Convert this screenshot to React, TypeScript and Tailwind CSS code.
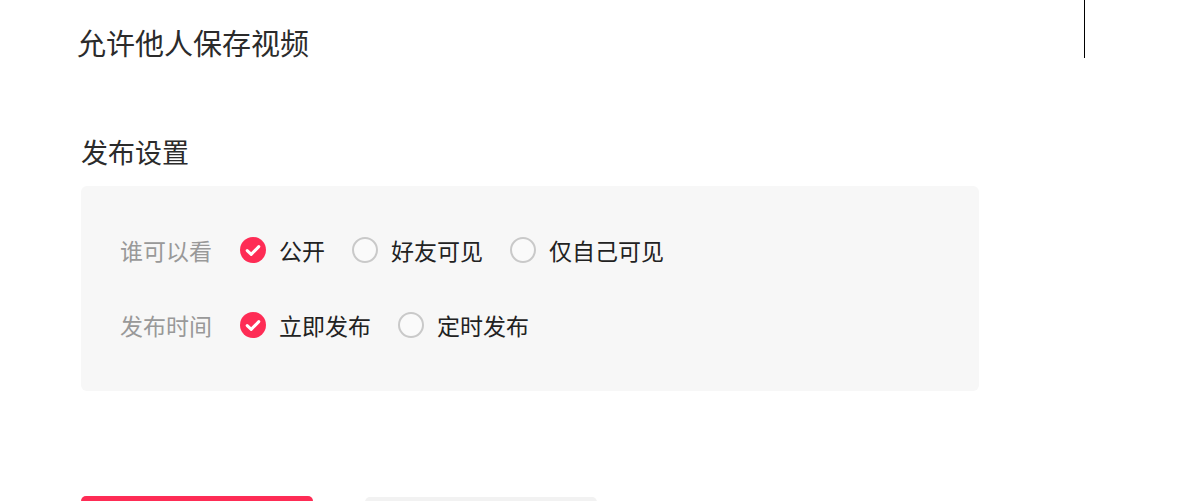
import React from 'react';

const font = { fontFamily: '"Microsoft YaHei", "Noto Sans CJK SC", "Noto Sans", sans-serif' };

type Option = { label: string; checked?: boolean };

function Radio({ checked }: { checked?: boolean }) {
  if (checked) {
    return (
      <svg width="26" height="26" viewBox="0 0 26 26" className="shrink-0">
        <circle cx="13" cy="13" r="13" fill="#fe2c55" />
        <path d="M7.2 13.6 L11.2 17.4 L18.8 9.6" fill="none" stroke="#fff" strokeWidth="3" strokeLinecap="round" strokeLinejoin="round" />
      </svg>
    );
  }
  return <span className="block w-[26px] h-[26px] shrink-0 rounded-full border-2 border-[#c9c9c9] bg-white/40" />;
}

function Row({ label, options }: { label: string; options: Option[] }) {
  return (
    <div className="flex items-center h-[40px]">
      <span className="w-[92px] mr-[28px] text-[23px] text-[#999] leading-none whitespace-nowrap">{label}</span>
      <div className="flex items-center gap-[27px]">
        {options.map((o) => (
          <label key={o.label} className="flex items-center gap-[13px] cursor-pointer">
            <Radio checked={o.checked} />
            <span className="text-[23px] text-[#222] leading-none whitespace-nowrap">{o.label}</span>
          </label>
        ))}
      </div>
    </div>
  );
}

export default function App() {
  return (
    <div className="relative w-[1193px] h-[501px] overflow-hidden bg-white" style={font}>
      {/* divider at the top right */}
      <div className="absolute left-[1084px] top-0 w-px h-[58px] bg-black" />

      <div className="pl-[77px] pt-[22px]">
        <h2 className="text-[29px] leading-[40px] text-[#2b2b2b] font-normal">允许他人保存视频</h2>
      </div>

      <div className="pl-[81px]">
        <h3 className="mt-[72px] text-[27px] leading-[36px] text-[#2b2b2b] font-normal">发布设置</h3>

        <div className="mt-[16px] w-[898px] h-[205px] rounded-md bg-[#f7f7f7] pl-[39px] pt-[44px] flex flex-col gap-[35px]">
          <Row label="谁可以看" options={[{ label: '公开', checked: true }, { label: '好友可见' }, { label: '仅自己可见' }]} />
          <Row label="发布时间" options={[{ label: '立即发布', checked: true }, { label: '定时发布' }]} />
        </div>

        <div className="mt-[105px] flex gap-[52px]">
          <button className="w-[232px] h-[44px] rounded-[5px] bg-[#fe2c55] text-white text-[20px]">发布</button>
          <button className="w-[232px] h-[44px] mt-px rounded-[5px] bg-[#f2f2f2] text-[#222] text-[20px]">取消</button>
        </div>
      </div>
    </div>
  );
}
